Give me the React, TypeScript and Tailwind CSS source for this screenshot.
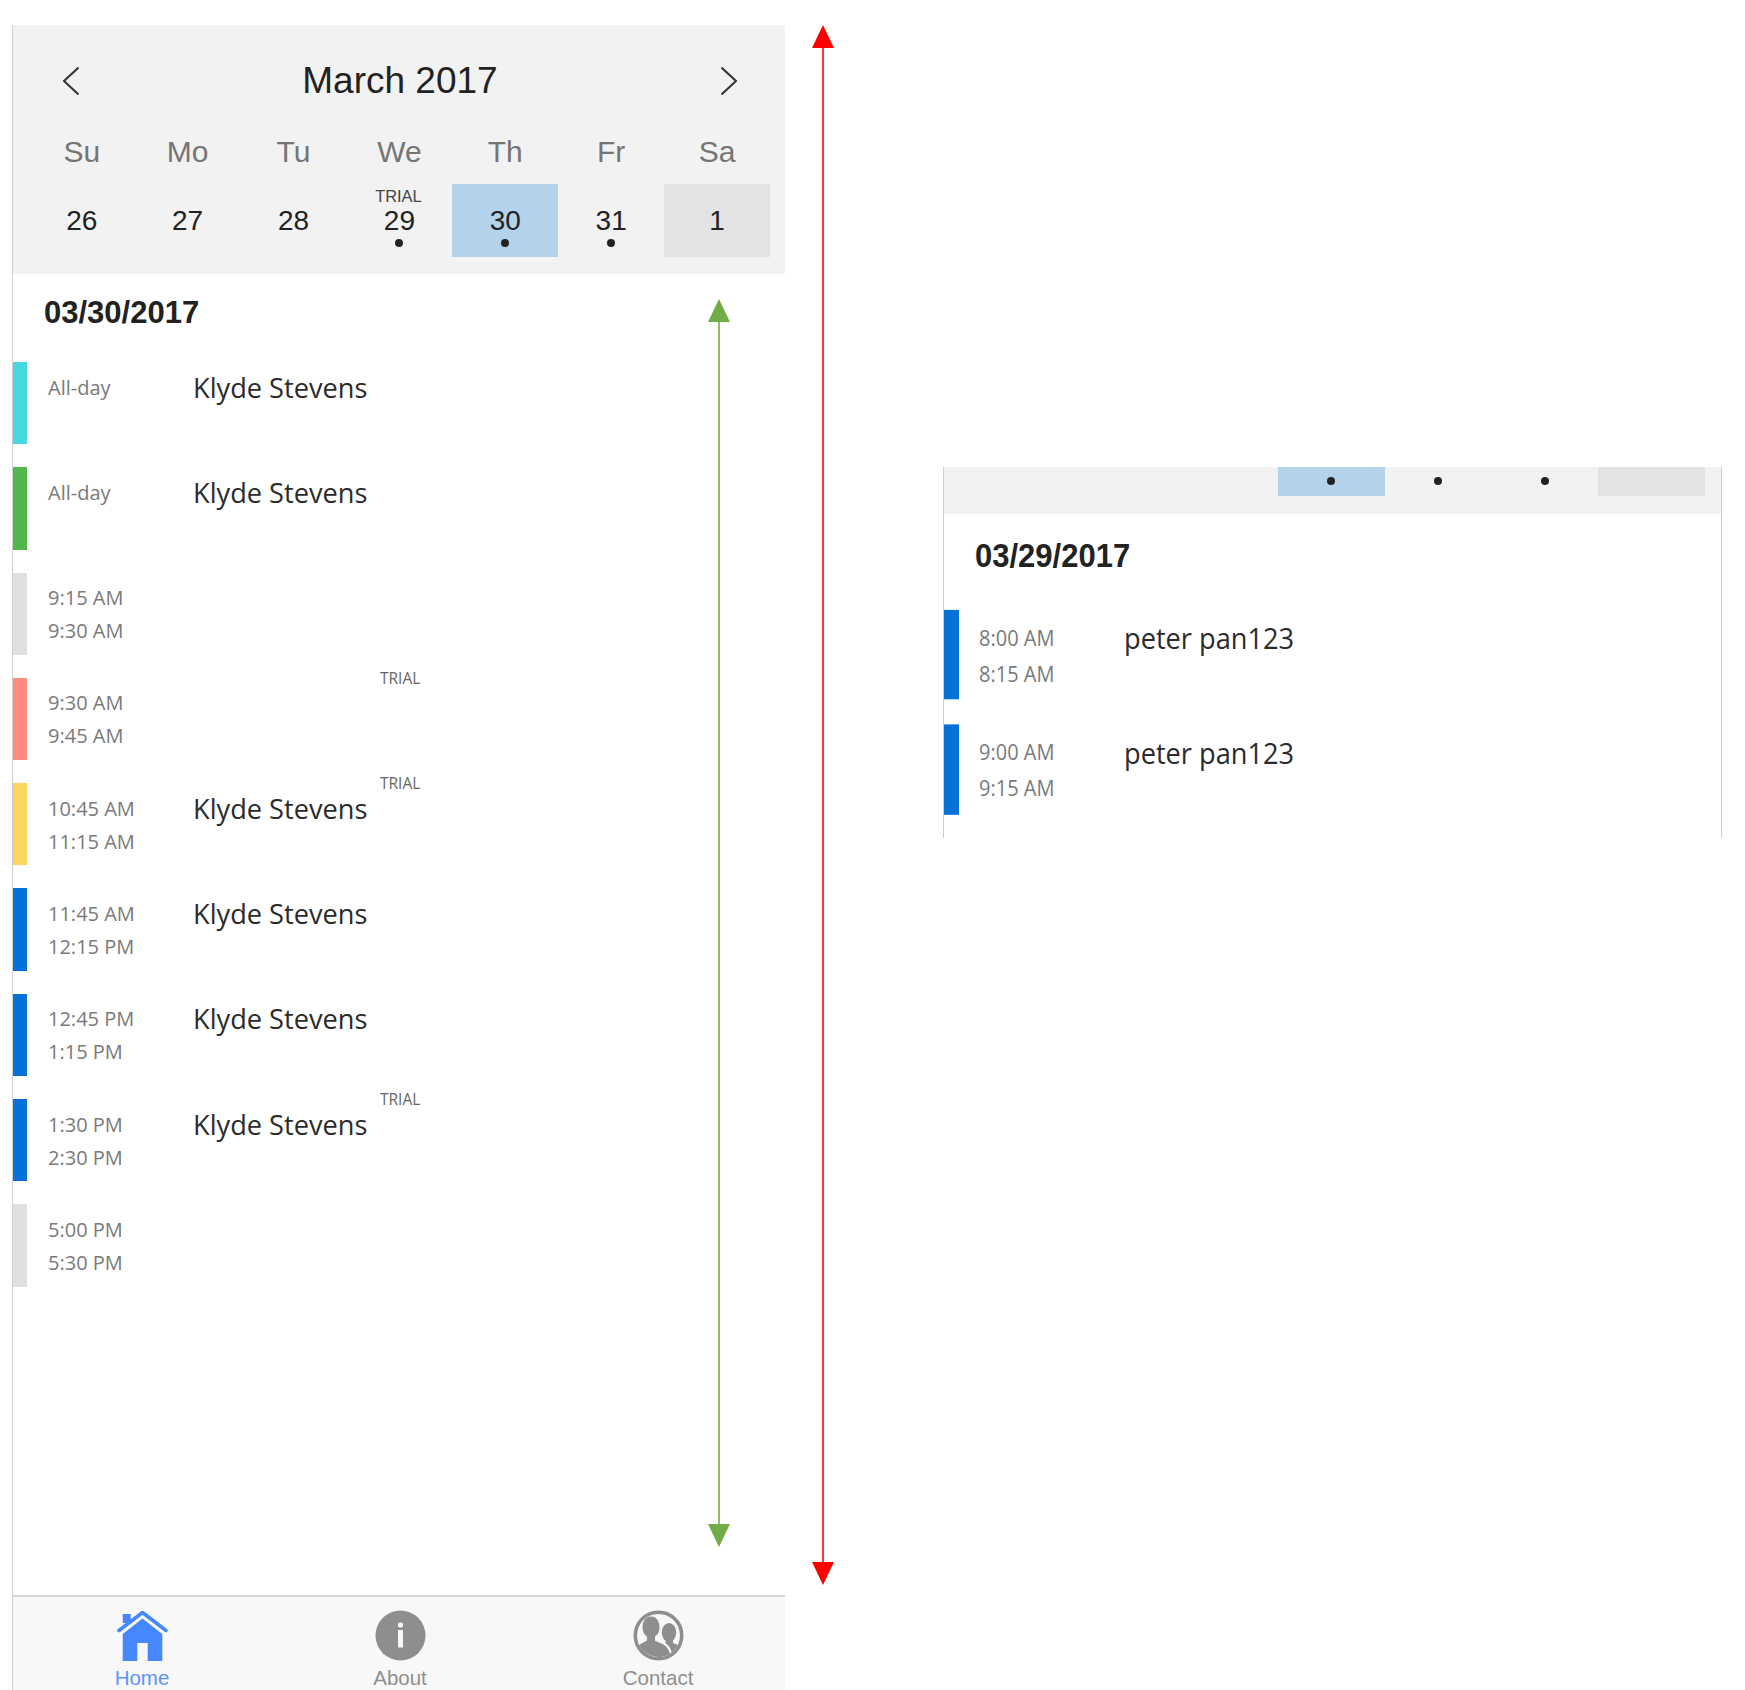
const DAYS = ['Su', 'Mo', 'Tu', 'We', 'Th', 'Fr', 'Sa'];

type Cell = { n: string; dot?: boolean; trial?: boolean; bg?: string };

const CELLS: Cell[] = [
  { n: '26' },
  { n: '27' },
  { n: '28' },
  { n: '29', dot: true, trial: true },
  { n: '30', dot: true, bg: 'bg-[#b3d2ec]' },
  { n: '31', dot: true },
  { n: '1', bg: 'bg-[#e3e3e3]' },
];

type Appt = { bar: string; from: string; to?: string; name?: string; trial?: boolean };

const MARCH_30: Appt[] = [
  { bar: 'bg-[#47d7de]', from: 'All-day', name: 'Klyde Stevens' },
  { bar: 'bg-[#50b848]', from: 'All-day', name: 'Klyde Stevens' },
  { bar: 'bg-[#e0e0e0]', from: '9:15 AM', to: '9:30 AM' },
  { bar: 'bg-[#ff8a7d]', from: '9:30 AM', to: '9:45 AM', trial: true },
  { bar: 'bg-[#fcd55f]', from: '10:45 AM', to: '11:15 AM', name: 'Klyde Stevens', trial: true },
  { bar: 'bg-[#0771d8]', from: '11:45 AM', to: '12:15 PM', name: 'Klyde Stevens' },
  { bar: 'bg-[#0771d8]', from: '12:45 PM', to: '1:15 PM', name: 'Klyde Stevens' },
  { bar: 'bg-[#0771d8]', from: '1:30 PM', to: '2:30 PM', name: 'Klyde Stevens', trial: true },
  { bar: 'bg-[#e0e0e0]', from: '5:00 PM', to: '5:30 PM' },
];

const MARCH_29: Appt[] = [
  { bar: 'bg-[#0771d8]', from: '8:00 AM', to: '8:15 AM', name: 'peter pan123' },
  { bar: 'bg-[#0771d8]', from: '9:00 AM', to: '9:15 AM', name: 'peter pan123' },
];

function Agenda({ date, items, wideBar }: { date: string; items: Appt[]; wideBar?: boolean }) {
  return (
    <div className="font-['Open_Sans',sans-serif]">
      <div className="h-[88px] pt-[19px] pl-[31px] font-['Liberation_Sans',sans-serif] text-[31px] leading-[40px] font-bold text-[#222]">
        {date}
      </div>
      <div className="flex flex-col gap-[23px]">
        {items.map((a, i) => (
          <div key={i} className="relative flex h-[82.3px]">
            <div className={`${wideBar ? 'w-[15px]' : 'w-[14px]'} shrink-0 ${a.bar}`} />
            <div className={`${wideBar ? 'ml-[20px]' : 'ml-[21px]'} w-[145px] shrink-0 pt-[8.6px] text-[20px] leading-[33px] text-[#7a7a7a]`}>
              <div>{a.from}</div>
              {a.to && <div>{a.to}</div>}
            </div>
            {a.name && <div className="pt-[7.5px] text-[27.2px] leading-[36px] text-[#2b2b2b]">{a.name}</div>}
            {a.trial && (
              <div className="absolute left-[367px] top-[-8px] text-[15.5px] leading-[16px] text-[#666]">TRIAL</div>
            )}
          </div>
        ))}
      </div>
    </div>
  );
}

function HomeIcon() {
  return (
    <svg width="51" height="51" viewBox="0 0 51 51" fill="none">
      <path d="M5.7 4H13.7V13H5.7Z" fill="#4587ff" />
      <path d="M2 20.5L25.5 2.5L49 20.5" stroke="#4587ff" strokeWidth="3.6" strokeLinecap="round" strokeLinejoin="round" />
      <path d="M25.5 8.5L45.3 24V51H30.7V33H20.3V51H5.7V24Z" fill="#4587ff" />
    </svg>
  );
}

function AboutIcon() {
  return (
    <svg width="51" height="51" viewBox="0 0 51 51">
      <circle cx="25.5" cy="25.5" r="25" fill="#8e8e8e" />
      <circle cx="25.5" cy="15" r="2.6" fill="#f8f8f8" />
      <rect x="23" y="20" width="5" height="17.5" fill="#f8f8f8" />
    </svg>
  );
}

function ContactIcon() {
  return (
    <svg width="51" height="51" viewBox="0 0 51 51">
      <defs>
        <clipPath id="contact-clip">
          <circle cx="25.5" cy="25.5" r="21.5" />
        </clipPath>
      </defs>
      <circle cx="25.5" cy="25.5" r="23.2" fill="#f8f8f8" stroke="#8e8e8e" strokeWidth="3.6" />
      <g clipPath="url(#contact-clip)" fill="#8e8e8e">
        <ellipse cx="36" cy="22.5" rx="7.2" ry="9.5" />
        <path d="M32.5 29V33L27 36V51H50V37L40 33V29Z" />
        <path
          d="M18 5.5C12 5.5 8.5 11 8.5 17C8.5 21 10 25 13 27V30L2 36V52H38V44C37 39 34 35 30 33L23 30V27C26 25 27.5 21 27.5 17C27.5 11 24 5.5 18 5.5Z"
          stroke="#f8f8f8"
          strokeWidth="2"
        />
      </g>
    </svg>
  );
}

function Tab({ label, color, children }: { label: string; color: string; children: React.ReactNode }) {
  return (
    <div className="flex w-[258px] shrink-0 flex-col items-center pt-[13px]">
      {children}
      <div className={`mt-[5px] text-[20.5px] leading-[24px] ${color}`}>{label}</div>
    </div>
  );
}

export default function App() {
  return (
    <div className="relative flex h-[1690px] w-[1745px] items-start overflow-hidden bg-white font-['Liberation_Sans',sans-serif]">
      {/* phone on the left */}
      <div className="mt-[25px] ml-[12px] flex h-[1665px] w-[773px] flex-col border-l border-[#cfcfcf]">
        <div className="h-[249px] shrink-0 bg-[#f2f2f2]">
          <div className="flex h-[85px] items-start justify-between pt-[30px] pr-[48px] pl-[50px]">
            <svg width="16" height="28" viewBox="0 0 16 28" fill="none" className="mt-[12px]">
              <path d="M15.5 0.5L1 14L15.5 27.5" stroke="#333" strokeWidth="2" />
            </svg>
            <div className="flex-1 pt-px text-center text-[37px] leading-[50px] text-[#222]">March 2017</div>
            <svg width="16" height="28" viewBox="0 0 16 28" fill="none" className="mt-[12px]">
              <path d="M0.5 0.5L15 14L0.5 27.5" stroke="#333" strokeWidth="2" />
            </svg>
          </div>
          <div className="grid h-[74px] w-[757px] grid-cols-7 pt-[22px] pl-[15.8px]">
            {DAYS.map((d) => (
              <div key={d} className="text-center text-[30px] leading-[40px] text-[#757575]">
                {d}
              </div>
            ))}
          </div>
          <div className="grid h-[73px] w-[757px] grid-cols-7 pl-[15.8px]">
            {CELLS.map((c) => (
              <div key={c.n} className={`relative flex items-center justify-center text-[28px] text-[#222] ${c.bg ?? ''}`}>
                {c.n}
                {c.trial && (
                  <div className="absolute top-[4px] left-[-1px] w-full text-center text-[16.4px] leading-[16px] text-[#444]">
                    TRIAL
                  </div>
                )}
                {c.dot && (
                  <div className="absolute top-[55px] left-1/2 size-[8px] -translate-x-1/2 rounded-full bg-[#222]" />
                )}
              </div>
            ))}
          </div>
        </div>

        <div className="flex-1">
          <Agenda date="03/30/2017" items={MARCH_30} />
        </div>

        <div className="flex h-[95px] shrink-0 overflow-hidden border-t-2 border-[#d4d4d4] bg-[#f8f8f8]">
          <Tab label="Home" color="text-[#5b93ff]">
            <HomeIcon />
          </Tab>
          <Tab label="About" color="text-[#8e8e8e]">
            <AboutIcon />
          </Tab>
          <Tab label="Contact" color="text-[#8e8e8e]">
            <ContactIcon />
          </Tab>
        </div>
      </div>

      {/* scrolled phone on the right */}
      <div className="mt-[467px] ml-[158px] h-[371px] w-[779px] overflow-hidden border-x border-[#cfcfcf]">
        <div className="flex h-[47px] justify-end bg-[#f2f2f2] pr-[16.5px]">
          {['bg-[#b3d2ec]', '', '', 'bg-[#e3e3e3]'].map((bg, i) => (
            <div key={i} className={`relative h-[29px] w-[106.6px] ${bg}`}>
              {i < 3 && <div className="absolute top-[10px] left-1/2 size-[8px] -translate-x-1/2 rounded-full bg-[#222]" />}
            </div>
          ))}
        </div>
        <div className="origin-top scale-y-[1.09]">
          <Agenda date="03/29/2017" items={MARCH_29} wideBar />
        </div>
      </div>

      {/* size annotations */}
      <svg className="pointer-events-none absolute top-0 left-0" width="1745" height="1690" viewBox="0 0 1745 1690">
        <path d="M823 40V1570" stroke="#ff0000" strokeWidth="1.6" />
        <path d="M823 25L834 48H812Z" fill="#ff0000" />
        <path d="M823 1585L834 1562H812Z" fill="#ff0000" />
        <path d="M719 315V1530" stroke="#70ad47" strokeWidth="1.6" />
        <path d="M719 299L730 322H708Z" fill="#70ad47" />
        <path d="M719 1547L730 1524H708Z" fill="#70ad47" />
      </svg>
    </div>
  );
}
